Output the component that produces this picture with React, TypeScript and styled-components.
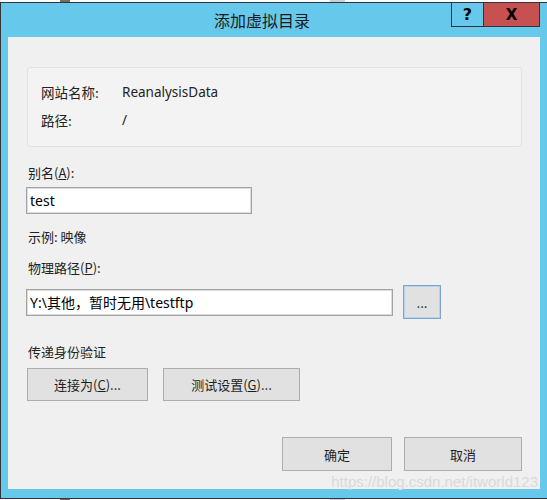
import React from 'react';
import styled, { createGlobalStyle } from 'styled-components';

const GlobalStyle = createGlobalStyle`
  html, body {
    margin: 0;
    padding: 0;
    background: #ffffff;
  }
  body {
    font-family: "Noto Sans", "Noto Sans CJK SC", sans-serif;
  }
`;

const Desktop = styled.div`
  width: 547px;
  height: 500px;
  padding-top: 2px;
  box-sizing: border-box;
  overflow: hidden;
  background: linear-gradient(90deg, #fff 0 60px, #7a6a55 60px 70px, #fff 70px 330px, #c9cfd6 330px 345px, #fff 345px);
`;

const Window = styled.div`
  width: 560px;
  height: 497px;
  box-sizing: border-box;
  border: 1px solid #2f3437;
  background: #66c9ec;
  display: flex;
  flex-direction: column;
`;

const TitleBar = styled.div`
  height: 34px;
  display: flex;
  align-items: flex-start;
  padding-right: 19px;
`;

const Title = styled.div`
  flex: 1;
  text-align: center;
  padding-left: 72px;
  line-height: 34px;
  font-size: 16px;
  color: #1b1b1b;
  font-family: "Noto Sans CJK SC", sans-serif;
`;

const CaptionButton = styled.div<{ $close?: boolean }>`
  width: ${p => (p.$close ? '56px' : '33px')};
  height: 24px;
  box-sizing: border-box;
  border: 1px solid #2f3437;
  border-top: none;
  border-left: ${p => (p.$close ? 'none' : '1px solid #2f3437')};
  background: ${p => (p.$close ? '#c75050' : '#66c9ec')};
  display: flex;
  align-items: center;
  justify-content: center;
  font-family: "DejaVu Sans", sans-serif;
  font-weight: bold;
  font-size: ${p => (p.$close ? '15px' : '16px')};
  color: #000;
`;

const Client = styled.div`
  position: relative;
  margin: 0 19px 0 7px;
  height: 452px;
  background: #f0f0f0;
  display: flex;
  flex-direction: column;
  color: #222;
  font-size: 13px;
`;

const InfoBox = styled.div`
  margin: 30px 18px 0 19px;
  height: 80px;
  box-sizing: border-box;
  border: 1px solid #e2e2e2;
  border-radius: 3px;
  background: #f3f3f3;
  padding: 14px 0 0 13px;
  display: grid;
  grid-template-columns: 81px 1fr;
  grid-auto-rows: 28px;
  align-content: start;
`;

const InfoCell = styled.div<{ $cjk?: boolean }>`
  line-height: 20px;
  font-size: 13.5px;
  font-family: ${p => (p.$cjk ? '"Noto Sans CJK SC", sans-serif' : '"Noto Sans", sans-serif')};
`;

const Label = styled.div<{ $mt: number }>`
  margin: ${p => p.$mt}px 0 0 20px;
  line-height: 20px;
  font-family: "Noto Sans CJK SC", sans-serif;
`;

const TextInput = styled.div<{ $w: number }>`
  width: ${p => p.$w}px;
  height: 27px;
  box-sizing: border-box;
  border: 1px solid #a3a3a3;
  box-shadow: inset 0 0 0 1px #dcdcdc;
  background: #ffffff;
  padding-left: 3px;
  display: flex;
  align-items: center;
  font-size: 14px;
  color: #000;
  font-family: "Noto Sans", "Noto Sans CJK SC", sans-serif;
`;

const Row = styled.div<{ $mt: number; $end?: boolean }>`
  display: flex;
  align-items: center;
  gap: ${p => (p.$end ? '12px' : '10px')};
  margin: ${p => p.$mt}px ${p => (p.$end ? '18px' : '0')} 0 18px;
  justify-content: ${p => (p.$end ? 'flex-end' : 'flex-start')};
`;

const ButtonRow = styled(Row)`
  gap: 15px;
  margin-left: 19px;
`;

const Button = styled.div<{ $w: number; $h?: number; $focus?: boolean }>`
  width: ${p => p.$w}px;
  height: ${p => p.$h ?? 33}px;
  box-sizing: border-box;
  border: 1px solid ${p => (p.$focus ? '#7aa5cf' : '#adadad')};
  box-shadow: ${p => (p.$focus ? 'inset 0 0 0 1px #b7d2ea' : 'none')};
  background: #e1e1e1;
  display: flex;
  align-items: center;
  justify-content: center;
  font-size: 13px;
  color: #1e1e1e;
  font-family: "Noto Sans CJK SC", sans-serif;
`;

const Watermark = styled.div`
  position: absolute;
  right: 2px;
  bottom: -3px;
  font-family: "Liberation Sans", Arial, sans-serif;
  font-size: 15px;
  color: #dadada;
  line-height: 20px;
`;

export default function App() {
  return (
    <>
      <GlobalStyle />
      <Desktop>
        <Window>
          <TitleBar>
            <Title>添加虚拟目录</Title>
            <CaptionButton>?</CaptionButton>
            <CaptionButton $close>X</CaptionButton>
          </TitleBar>
          <Client>
            <InfoBox>
              <InfoCell $cjk>网站名称:</InfoCell>
              <InfoCell>ReanalysisData</InfoCell>
              <InfoCell $cjk>路径:</InfoCell>
              <InfoCell>/</InfoCell>
            </InfoBox>

            <Label $mt={16}>
              别名(<u>A</u>):
            </Label>
            <Row $mt={4}>
              <TextInput $w={226}>test</TextInput>
            </Row>

            <Label $mt={13}>示例: 映像</Label>

            <Label $mt={11}>
              物理路径(<u>P</u>):
            </Label>
            <Row $mt={7}>
              <TextInput $w={367}>Y:\其他，暂时无用\testftp</TextInput>
              <Button $w={38} $h={34} $focus>...</Button>
            </Row>

            <Label $mt={23}>传递身份验证</Label>
            <ButtonRow $mt={6}>
              <Button $w={121}>
                连接为(<u>C</u>)...
              </Button>
              <Button $w={137}>
                测试设置(<u>G</u>)...
              </Button>
            </ButtonRow>

            <Row $mt={36} $end>
              <Button $w={110} $h={34}>确定</Button>
              <Button $w={118} $h={34}>取消</Button>
            </Row>

            <Watermark>https://blog.csdn.net/itworld123</Watermark>
          </Client>
        </Window>
      </Desktop>
    </>
  );
}
